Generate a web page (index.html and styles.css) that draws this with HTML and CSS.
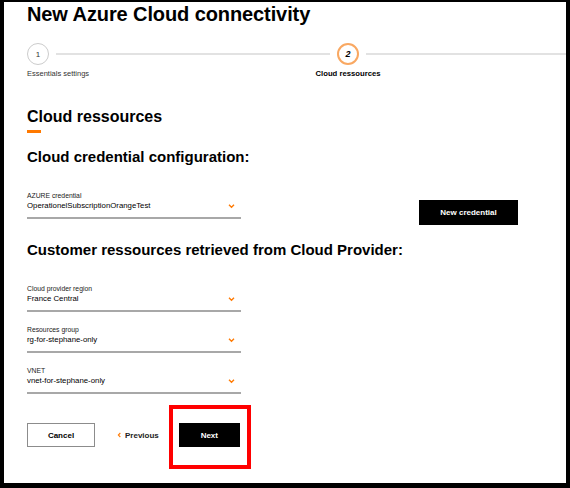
FILE: index.html
```html
<!DOCTYPE html>
<html lang="en">
<head>
  <meta charset="UTF-8" />
  <title>New Azure Cloud connectivity</title>
  <link rel="stylesheet" href="styles.css">
</head>
<body>
  <div class="panel">
    <h1 class="title">New Azure Cloud connectivity</h1>

    <div class="stepper">
      <div class="step">
        <span class="step-num">1</span>
        <span class="step-label">Essentials settings</span>
      </div>
      <div class="step-line"></div>
      <div class="step current">
        <span class="step-num">2</span>
        <span class="step-label">Cloud ressources</span>
      </div>
      <div class="step-line"></div>
    </div>

    <h2 class="section-title">Cloud ressources</h2>

    <h3 class="sub-title">Cloud credential configuration:</h3>
    <div class="cred-row">
      <div class="field">
        <label>AZURE credential</label>
        <div class="field-value">
          <span>OperationelSubscriptionOrangeTest</span>
          <svg class="chevron" viewBox="0 0 8 6" width="7" height="5"><polyline points="1,1 4,4 7,1" /></svg>
        </div>
      </div>
      <button class="btn btn-dark new-cred">New credential</button>
    </div>

    <h3 class="sub-title second">Customer ressources retrieved from Cloud Provider:</h3>
    <div class="field">
      <label>Cloud provider region</label>
      <div class="field-value">
        <span>France Central</span>
        <svg class="chevron" viewBox="0 0 8 6" width="7" height="5"><polyline points="1,1 4,4 7,1" /></svg>
      </div>
    </div>
    <div class="field">
      <label>Resources group</label>
      <div class="field-value">
        <span>rg-for-stephane-only</span>
        <svg class="chevron" viewBox="0 0 8 6" width="7" height="5"><polyline points="1,1 4,4 7,1" /></svg>
      </div>
    </div>
    <div class="field">
      <label>VNET</label>
      <div class="field-value">
        <span>vnet-for-stephane-only</span>
        <svg class="chevron" viewBox="0 0 8 6" width="7" height="5"><polyline points="1,1 4,4 7,1" /></svg>
      </div>
    </div>

    <div class="actions">
      <button class="btn btn-light">Cancel</button>
      <button class="btn-link">
        <svg class="prev-icon" viewBox="0 0 6 8" width="4" height="6"><polyline points="5,1 2,4 5,7" /></svg>
        Previous
      </button>
      <div class="highlight">
        <button class="btn btn-dark next">Next</button>
      </div>
    </div>
  </div>
</body>
</html>
```

FILE: styles.css
```css
/* === Base === */
:root{
  --orange:#ff7900;
  --line:#e2e2e2;
}
html,body{margin:0;height:100%;overflow:hidden}
body{
  background:#000;
  font-family:"Liberation Sans",Arial,sans-serif;
  color:#000;
}
.panel{
  background:#fff;
  margin:2px 4px 0 4px;
  height:481px;
  padding-left:23px;
  box-sizing:border-box;
  overflow:hidden;
}

/* === Title === */
.title{margin:0;padding-top:1px;font-size:20px;line-height:22px;font-weight:700;letter-spacing:-.1px}

/* === Stepper === */
.stepper{display:flex;align-items:flex-start;margin-top:18px;width:620px}
.step{display:flex;flex-direction:column;align-items:flex-start;width:22px;flex:none}
.step-num{width:20px;height:20px;border:1px solid #ccc;border-radius:50%;display:flex;align-items:center;justify-content:center;font-size:8px;color:#333}
.step-label{margin-top:5px;font-size:7.5px;line-height:8px;color:#333;white-space:nowrap}
.step.current{align-items:center}
.step.current .step-num{border:2px solid #f9a862;width:18px;height:18px;font-weight:700;font-style:italic;color:#000;font-size:9px}
.step.current .step-label{font-weight:700;color:#000;font-size:7.7px}
.step-line{flex:1;height:2px;background:var(--line);margin:10px 7px 0}

/* === Headings === */
.section-title{margin:29px 0 0;font-size:16px;line-height:19px;font-weight:700}
.section-title::after{content:"";display:block;width:14px;height:3px;background:var(--orange);margin-top:4px}
.sub-title{margin:15px 0 0;font-size:15px;line-height:18px;font-weight:700}
.sub-title.second{margin-top:22px}

/* === Fields === */
.cred-row{display:flex;align-items:flex-start;margin-top:26px}
.field{width:214px;border-bottom:2px solid #a8a8a8;padding-bottom:6px;margin-top:14px}
.cred-row .field{margin-top:0}
.sub-title.second + .field{margin-top:26px}
.field label{display:block;font-size:6.8px;line-height:8px;color:#222}
.field-value{display:flex;align-items:center;justify-content:space-between;font-size:7.8px;line-height:10px;margin-top:1px;padding-right:6px}
.chevron{fill:none;stroke:var(--orange);stroke-width:1.6}

/* === Buttons === */
.btn{font-family:inherit;font-size:8px;font-weight:700;height:24px;box-sizing:border-box;cursor:pointer}
.btn-dark{background:#000;color:#fff;border:1px solid #000}
.btn-light{background:#fff;color:#000;border:1px solid #8c8c8c}
.new-cred{width:99px;height:25px;margin:8px 0 -8px 178px}
.actions{display:flex;align-items:center;margin-top:29px}
.actions .btn-light{width:68px}
.btn-link{background:none;border:none;padding:0;margin-left:22px;font-family:inherit;font-size:8px;font-weight:700;color:#222;display:flex;align-items:center;gap:4px;cursor:pointer}
.prev-icon{fill:none;stroke:var(--orange);stroke-width:1.6}
.highlight{position:relative;margin-left:20px}
.highlight::before{content:"";position:absolute;left:-10px;top:-18px;width:74px;height:56px;border:4px solid #f00}
.next{width:61px}
```
